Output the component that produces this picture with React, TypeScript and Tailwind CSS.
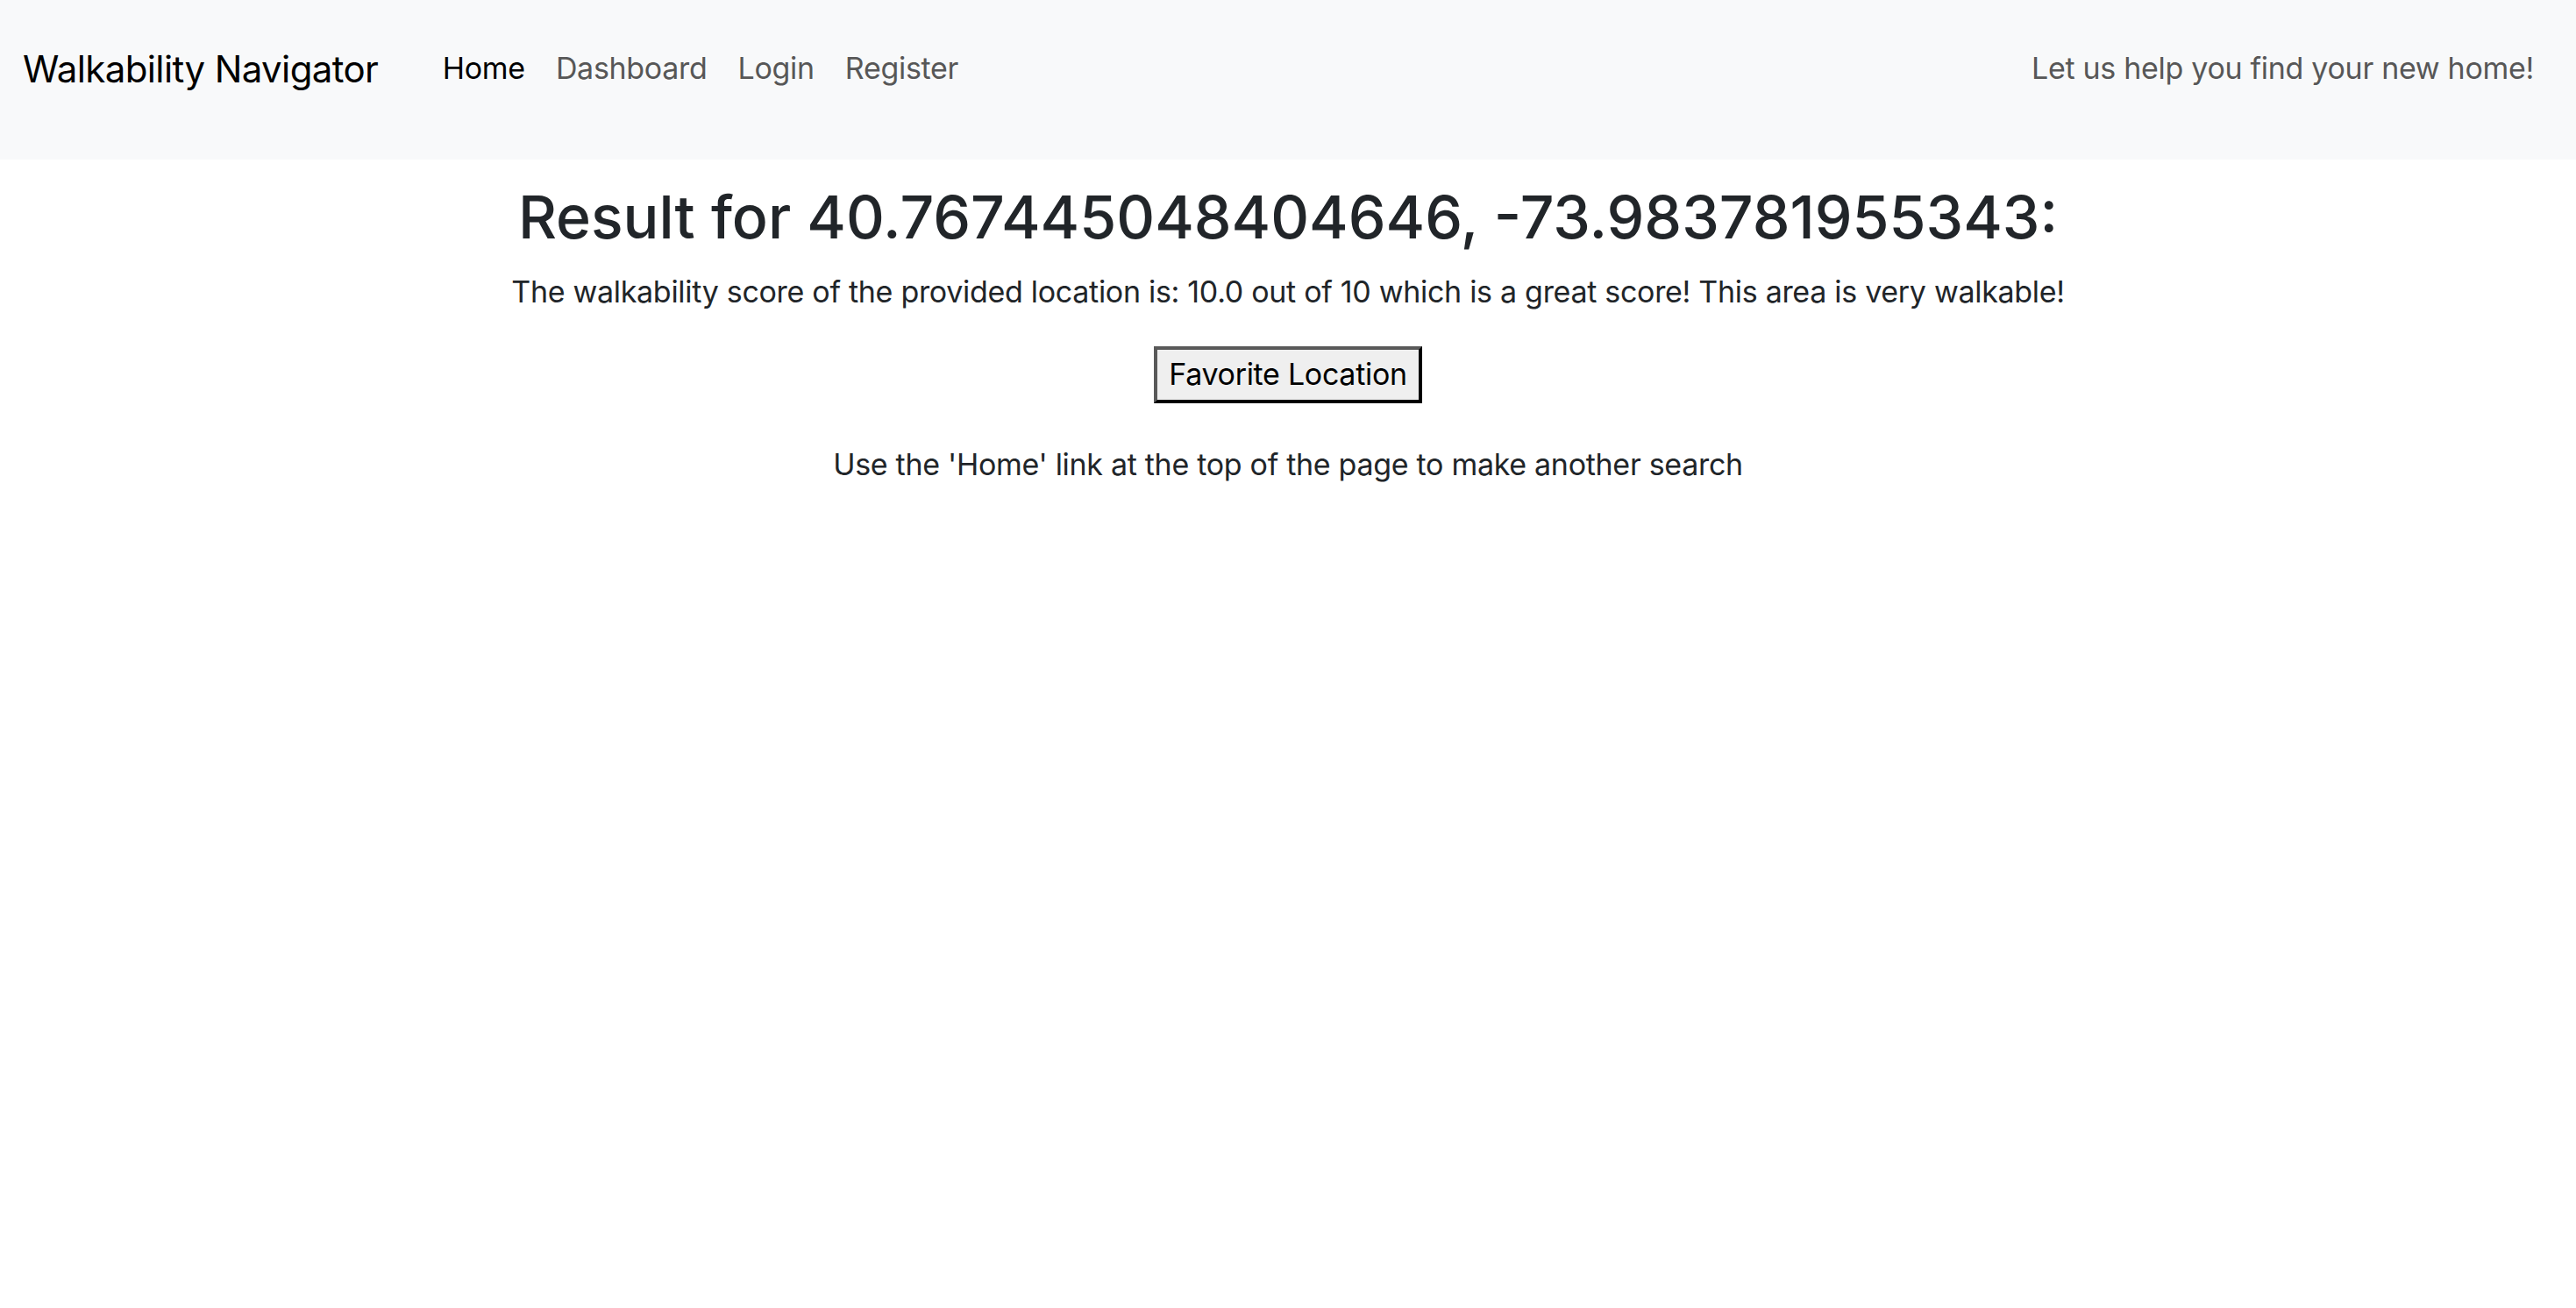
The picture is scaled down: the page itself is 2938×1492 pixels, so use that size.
export default function App() {
  return (
    <div className="min-h-screen bg-white font-['Inter','Noto_Sans',sans-serif] text-[#212529]">
      <nav className="flex h-[182px] items-center bg-[#f8f9fa] px-[26px] pb-[25px]">
        <a href="#" className="text-[42px] leading-[66px] tracking-[-0.6px] text-black">
          Walkability Navigator
        </a>
        <ul className="ml-[56px] flex items-center text-[34px] leading-[52.8px] tracking-[-0.3px]">
          <li>
            <a href="#" className="block px-[17.5px] text-black">
              Home
            </a>
          </li>
          <li>
            <a href="#" className="block px-[17.5px] text-[#575757]">
              Dashboard
            </a>
          </li>
          <li>
            <a href="#" className="block px-[17.5px] text-[#575757]">
              Login
            </a>
          </li>
          <li>
            <a href="#" className="block px-[17.5px] text-[#575757]">
              Register
            </a>
          </li>
        </ul>
        <span className="ml-auto mr-[22px] text-[34px] leading-[52.8px] tracking-[-0.3px] text-[#575757]">
          Let us help you find your new home!
        </span>
      </nav>

      <main className="flex flex-col items-center text-center">
        <h2 className="mt-[23px] mb-[17.6px] text-[68px] font-medium leading-[84.5px]">
          Result for 40.767445048404646, -73.983781955343:
        </h2>
        <p className="mb-[35.2px] text-[34px] leading-[52.8px] tracking-[-0.3px]">
          The walkability score of the provided location is: 10.0 out of 10 which is a great score! This area is very walkable!
        </p>
        <button
          type="button"
          className="border-[4px] border-solid border-t-[#595959] border-l-[#595959] border-r-black border-b-black bg-[#efefef] px-[13px] py-[2px] text-[34px] leading-[52.8px] tracking-[-0.3px] text-black"
        >
          Favorite Location
        </button>
        <p className="mt-[44px] text-[34px] leading-[52.8px] tracking-[-0.3px]">
          Use the 'Home' link at the top of the page to make another search
        </p>
      </main>
    </div>
  );
}
